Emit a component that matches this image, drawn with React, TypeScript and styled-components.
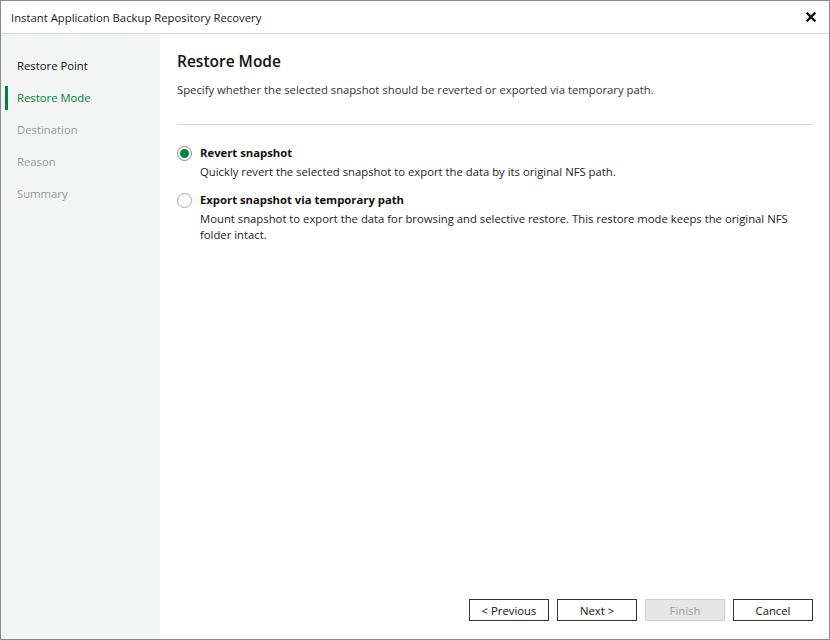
import React, { useState } from 'react'
import styled, { createGlobalStyle } from 'styled-components'

const GREEN = '#00843d'
const FONT = `"Segoe UI", "Open Sans", "Noto Sans", sans-serif`

const GlobalStyle = createGlobalStyle`
  html, body {
    margin: 0;
    padding: 0;
    background: #ffffff;
  }
  body {
    font-family: ${FONT};
    font-size: 11.3px;
    color: #1a1a1a;
  }
`

const steps = [
  { label: 'Restore Point', state: 'done' },
  { label: 'Restore Mode', state: 'active' },
  { label: 'Destination', state: 'disabled' },
  { label: 'Reason', state: 'disabled' },
  { label: 'Summary', state: 'disabled' },
] as const

type StepState = 'done' | 'active' | 'disabled'

const modes = [
  {
    id: 'revert',
    title: 'Revert snapshot',
    text: 'Quickly revert the selected snapshot to export the data by its original NFS path.',
  },
  {
    id: 'export',
    title: 'Export snapshot via temporary path',
    text: 'Mount snapshot to export the data for browsing and selective restore. This restore mode keeps the original NFS folder intact.',
  },
]

const App = () => {
  const [mode, setMode] = useState('revert')

  return (
    <>
      <GlobalStyle />
      <Window>
        <TitleBar>
          <Title>Instant Application Backup Repository Recovery</Title>
          <CloseButton aria-label="Close">
            <svg width="10" height="10" viewBox="0 0 10 10">
              <path d="M1.5 1.5 L8.5 8.5 M8.5 1.5 L1.5 8.5" stroke="#111" strokeWidth="2.3" strokeLinecap="square" />
            </svg>
          </CloseButton>
        </TitleBar>
        <Body>
          <Sidebar>
            {steps.map((s) => (
              <StepItem key={s.label} state={s.state as StepState}>
                {s.label}
              </StepItem>
            ))}
          </Sidebar>
          <Main>
            <Heading>Restore Mode</Heading>
            <Caption>Specify whether the selected snapshot should be reverted or exported via temporary path.</Caption>
            <Divider />
            <Options>
              {modes.map((m) => (
                <Option key={m.id} onClick={() => setMode(m.id)}>
                  <Radio checked={mode === m.id} />
                  <OptionText>
                    <OptionTitle>{m.title}</OptionTitle>
                    <OptionDesc>{m.text}</OptionDesc>
                  </OptionText>
                </Option>
              ))}
            </Options>
            <Footer>
              <Button>&lt; Previous</Button>
              <Button>Next &gt;</Button>
              <Button disabled>Finish</Button>
              <Button>Cancel</Button>
            </Footer>
          </Main>
        </Body>
      </Window>
    </>
  )
}

export default App

const Window = styled.div`
  box-sizing: border-box;
  width: 830px;
  height: 640px;
  border: 1px solid #8a8a8a;
  display: flex;
  flex-direction: column;
  background: #fff;
`

const TitleBar = styled.div`
  height: 32px;
  flex-shrink: 0;
  display: flex;
  align-items: center;
  justify-content: space-between;
  padding: 0 12px 0 10px;
  border-bottom: 1px solid #d4d4d4;
`

const Title = styled.div`
  color: #1a1a1a;
`

const CloseButton = styled.div`
  display: flex;
  align-items: center;
  width: 10px;
  height: 10px;
  margin-right: 1px;
`

const Body = styled.div`
  flex: 1;
  display: flex;
  min-height: 0;
`

const Sidebar = styled.div`
  width: 159px;
  flex-shrink: 0;
  background: #f3f4f4;
  padding-top: 21px;
  display: flex;
  flex-direction: column;
`

const StepItem = styled.div<{ state: StepState }>`
  position: relative;
  height: 32px;
  line-height: 22px;
  padding-left: 16px;
  color: ${({ state }) => (state === 'active' ? GREEN : state === 'disabled' ? '#9a9a9a' : '#111')};
  &::before {
    content: '';
    display: ${({ state }) => (state === 'active' ? 'block' : 'none')};
    position: absolute;
    left: 4px;
    top: -1px;
    width: 3px;
    height: 24px;
    background: ${GREEN};
  }
`

const Main = styled.div`
  flex: 1;
  display: flex;
  flex-direction: column;
  padding: 16px 16px 18px 17px;
`

const Heading = styled.div`
  font-size: 15.5px;
  font-weight: 600;
  color: #111;
  line-height: 22px;
`

const Caption = styled.div`
  margin-top: 10px;
  color: #333;
  line-height: 16px;
`

const Divider = styled.div`
  height: 1px;
  background: #d7d7d7;
  margin-top: 26px;
`

const Options = styled.div`
  margin-top: 20px;
  display: flex;
  flex-direction: column;
  gap: 12px;
`

const Option = styled.div`
  display: flex;
  gap: 8px;
  cursor: default;
`

const Radio = styled.span<{ checked: boolean }>`
  box-sizing: border-box;
  width: 15px;
  height: 15px;
  margin-top: 1px;
  flex-shrink: 0;
  border-radius: 50%;
  border: 1px solid ${({ checked }) => (checked ? '#8c8c8c' : '#a8a8a8')};
  background: #fff;
  display: flex;
  align-items: center;
  justify-content: center;
  &::after {
    content: '';
    display: ${({ checked }) => (checked ? 'block' : 'none')};
    width: 9px;
    height: 9px;
    border-radius: 50%;
    background: ${GREEN};
  }
`

const OptionText = styled.div`
  display: flex;
  flex-direction: column;
  gap: 3px;
`

const OptionTitle = styled.div`
  font-weight: 700;
  line-height: 16px;
  color: #111;
`

const OptionDesc = styled.div`
  line-height: 16px;
  color: #222;
`

const Footer = styled.div`
  margin-top: auto;
  display: flex;
  justify-content: flex-end;
  gap: 8px;
`

const Button = styled.button`
  box-sizing: border-box;
  width: 80px;
  height: 22px;
  font-family: ${FONT};
  font-size: 11.3px;
  color: #111;
  background: #fff;
  border: 1px solid #333;
  padding: 0;
  &:disabled {
    color: #a0a0a0;
    background: #e6e6e6;
    border-color: #cfcfcf;
  }
`
